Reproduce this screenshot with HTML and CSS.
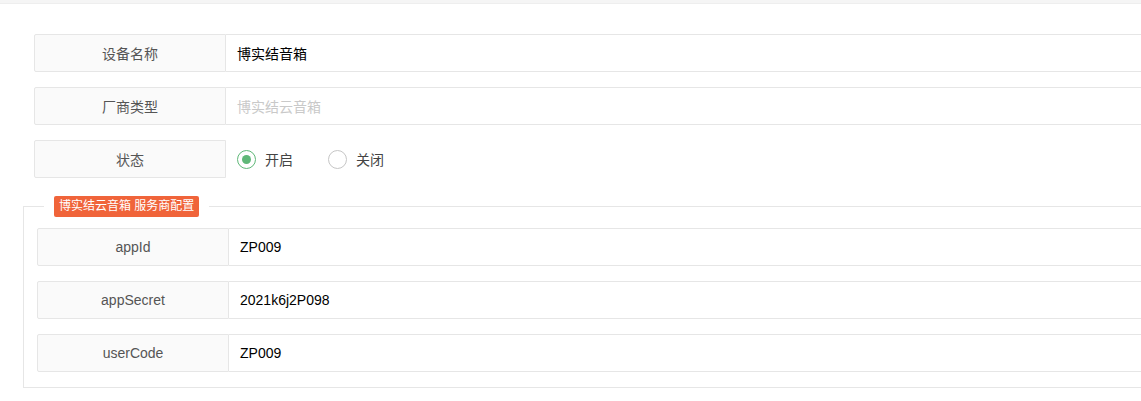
FILE: index.html
```html
<!DOCTYPE html>
<html lang="zh-CN">
<head>
<meta charset="utf-8">
<title>设备配置</title>
<link rel="stylesheet" href="styles.css">
</head>
<body>
<div class="topbar"></div>
<div class="page">
  <form class="form">
    <div class="row">
      <label class="label">设备名称</label>
      <div class="input">博实结音箱</div>
    </div>
    <div class="row">
      <label class="label">厂商类型</label>
      <div class="input placeholder">博实结云音箱</div>
    </div>
    <div class="row">
      <label class="label">状态</label>
      <div class="radios">
        <span class="radio checked"><i class="dot"></i>开启</span>
        <span class="radio"><i class="dot"></i>关闭</span>
      </div>
    </div>
    <fieldset class="group">
      <legend class="legend"><span class="badge">博实结云音箱 服务商配置</span></legend>
      <div class="row">
        <label class="label">appId</label>
        <div class="input">ZP009</div>
      </div>
      <div class="row">
        <label class="label">appSecret</label>
        <div class="input">2021k6j2P098</div>
      </div>
      <div class="row">
        <label class="label">userCode</label>
        <div class="input">ZP009</div>
      </div>
    </fieldset>
  </form>
</div>
</body>
</html>
```
FILE: styles.css
```css
html, body {
  margin: 0;
  padding: 0;
  background: #fff;
  overflow: hidden;
}
body {
  font-family: "Liberation Sans", "Noto Sans CJK SC", sans-serif;
  font-size: 14px;
  color: #333;
}
.topbar {
  height: 3px;
  background: #f5f5f5;
  border-bottom: 1px solid #eeeeee;
}
.page {
  padding: 30px 0 0 23px;
}
.form {
  width: 1300px;
}
.row {
  display: flex;
  height: 38px;
  margin: 0 0 15px 11px;
}
.label {
  box-sizing: border-box;
  width: 192px;
  flex: none;
  display: flex;
  align-items: center;
  justify-content: center;
  background: #fafafa;
  border: 1px solid #e6e6e6;
  border-radius: 2px 0 0 2px;
  color: #555;
}
.input {
  flex: 1;
  box-sizing: border-box;
  display: flex;
  align-items: center;
  padding-left: 11px;
  border: 1px solid #e6e6e6;
  border-left: none;
  color: #000;
}
.input.placeholder {
  color: #c9c9c9;
}
.radios {
  display: flex;
  align-items: center;
  padding-left: 11px;
}
.radio {
  display: flex;
  align-items: center;
  margin-right: 35px;
  color: #444;
}
.dot {
  box-sizing: border-box;
  width: 19px;
  height: 19px;
  border: 1px solid #c6c6c6;
  border-radius: 50%;
  margin-right: 9px;
  display: flex;
  align-items: center;
  justify-content: center;
}
.radio.checked .dot {
  border-color: #5fb878;
}
.radio.checked .dot::after {
  content: "";
  width: 9px;
  height: 9px;
  border-radius: 50%;
  background: #5fb878;
}
.group {
  margin: 18px 0 0 0;
  padding: 11px 0 0 13px;
  border: 1px solid #e6e6e6;
  border-right: none;
  min-width: 0;
}
.group .row {
  margin-left: 0;
}
.legend {
  margin-left: 7px;
  padding: 0 10px;
}
.badge {
  display: block;
  height: 21px;
  line-height: 21px;
  padding: 0 5px;
  background: #f0643a;
  color: #fff;
  font-size: 12px;
  border-radius: 2px;
}
```
